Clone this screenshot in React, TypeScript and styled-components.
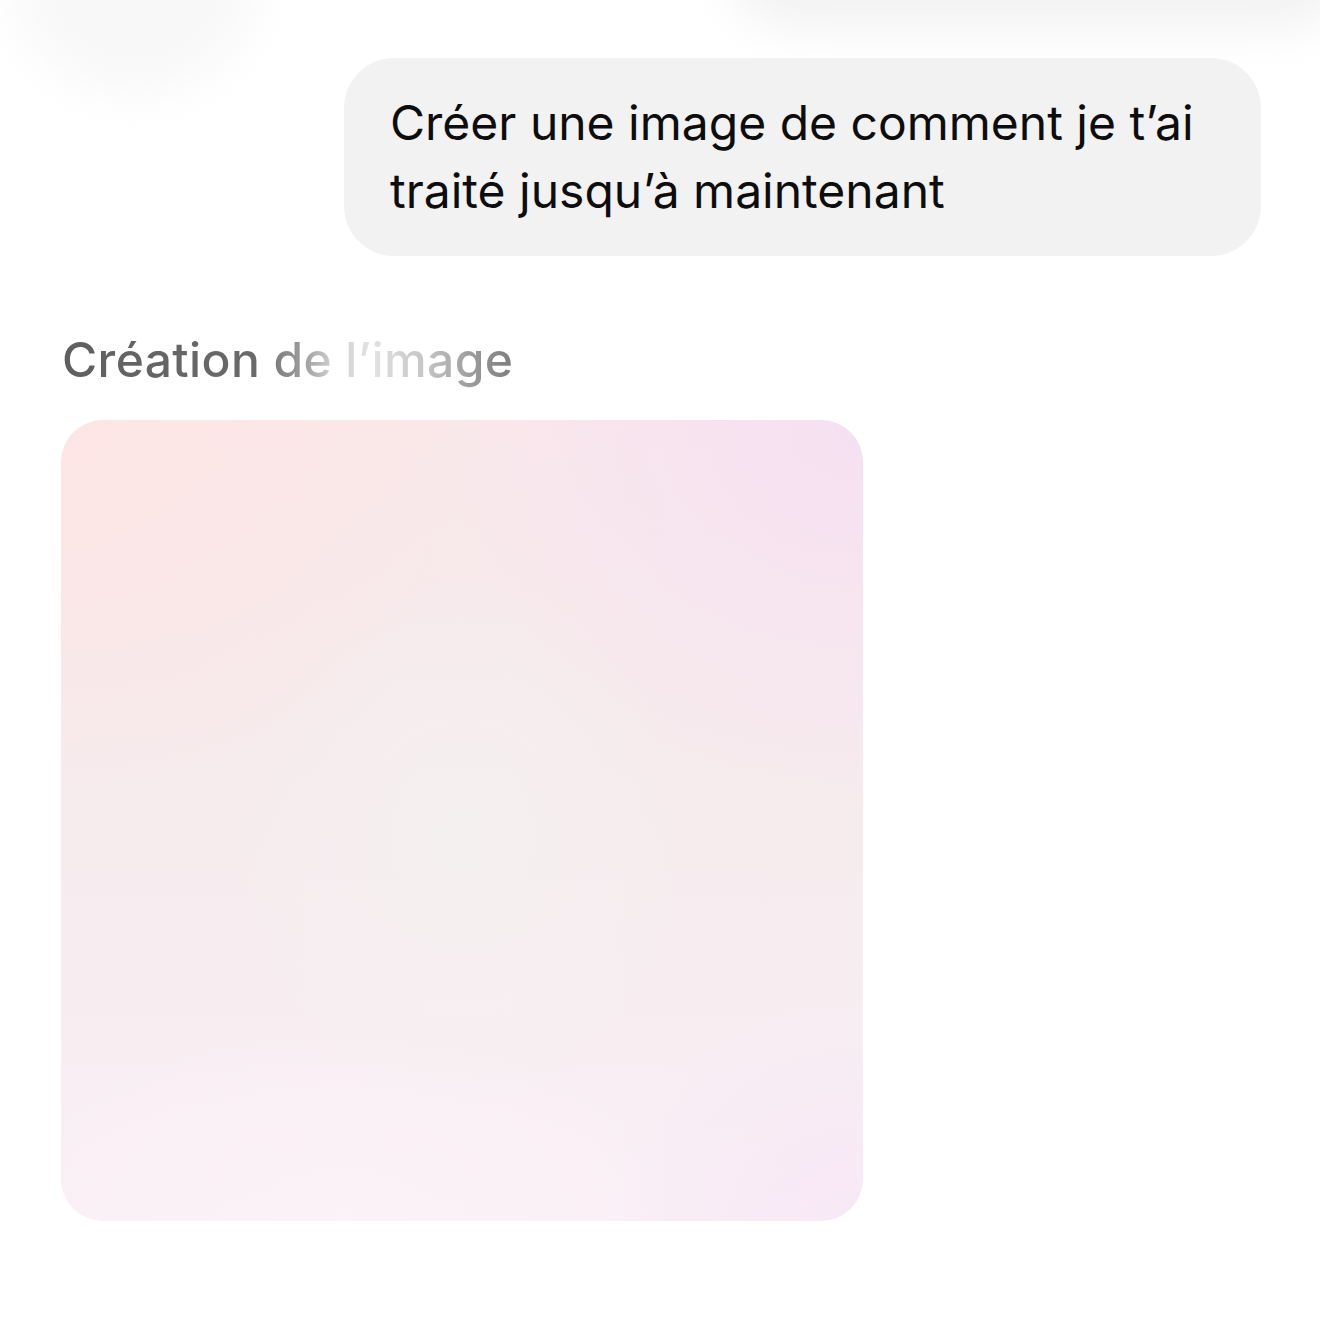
import React from 'react';
import styled, { createGlobalStyle } from 'styled-components';

const GlobalStyle = createGlobalStyle`
  html, body {
    margin: 0;
    padding: 0;
    background: #ffffff;
  }
  body {
    font-family: 'Inter', 'Roboto', 'Liberation Sans', sans-serif;
    -webkit-font-smoothing: antialiased;
  }
`;

const Page = styled.div`
  width: 1320px;
  height: 1320px;
  overflow: hidden;
  background: #ffffff;
  display: flex;
  flex-direction: column;
`;

// blurred remains of the header controls scrolled above the viewport
const TopBar = styled.div`
  display: flex;
  align-items: flex-end;
  justify-content: space-between;
  height: 0;
  overflow: visible;
  padding: 0 0 0 10px;
`;

const GhostCircle = styled.div`
  flex: none;
  width: 250px;
  height: 250px;
  margin-bottom: -95px;
  border-radius: 50%;
  background: #f8f8f8;
  filter: blur(22px);
`;

const GhostPill = styled.div`
  flex: none;
  width: 640px;
  height: 160px;
  margin-right: -40px;
  margin-bottom: -30px;
  border-radius: 80px;
  background: #f3f3f3;
  filter: blur(22px);
`;

const Thread = styled.div`
  position: relative;
  display: flex;
  flex-direction: column;
  padding: 58px 61px 0 61px;
`;

const UserRow = styled.div`
  display: flex;
  justify-content: flex-end;
`;

const Bubble = styled.div`
  width: 917px;
  box-sizing: border-box;
  padding: 31px 40px 31px 46px;
  border-radius: 50px;
  background: #f2f2f2;
  color: #0d0d0d;
  font-size: 48px;
  line-height: 68px;
  letter-spacing: 0px;
  margin-right: -2px;
`;

const Status = styled.div`
  margin-top: 76px;
  margin-left: 1px;
  font-size: 48px;
  line-height: 56px;
  font-weight: 500;
  letter-spacing: 0.4px;
  background: linear-gradient(
    90deg,
    #5f5f5f 0px,
    #6a6a6a 195px,
    #9a9a9a 240px,
    #cfcfcf 270px,
    #e2e2e2 310px,
    #c4c4c4 365px,
    #8e8e8e 425px,
    #7c7c7c 455px
  );
  -webkit-background-clip: text;
  background-clip: text;
  color: transparent;
  width: max-content;
`;

const Placeholder = styled.div`
  margin-top: 32px;
  width: 802px;
  height: 801px;
  border-radius: 42px;
  background:
    radial-gradient(ellipse 460px 260px at 35% 100%, rgba(252, 243, 249, 0.95), transparent 75%),
    radial-gradient(ellipse 320px 380px at 50% 52%, rgba(244, 240, 240, 0.9), transparent 70%),
    radial-gradient(ellipse 560px 520px at 100% 0%, #f5e0f2, transparent 75%),
    radial-gradient(ellipse 560px 520px at 0% 0%, #fde5e4, transparent 75%),
    radial-gradient(ellipse 360px 300px at 100% 100%, #f8e8f6, transparent 75%),
    linear-gradient(180deg, #f9e8ea 0%, #f6ecee 50%, #f9eff5 100%);
`;

export default function App() {
  return (
    <>
      <GlobalStyle />
      <Page>
        <TopBar>
          <GhostCircle />
          <GhostPill />
        </TopBar>
        <Thread>
          <UserRow>
            <Bubble>
              Créer une image de comment je t’ai traité jusqu’à maintenant
            </Bubble>
          </UserRow>
          <Status>Création de l’image</Status>
          <Placeholder />
        </Thread>
      </Page>
    </>
  );
}
